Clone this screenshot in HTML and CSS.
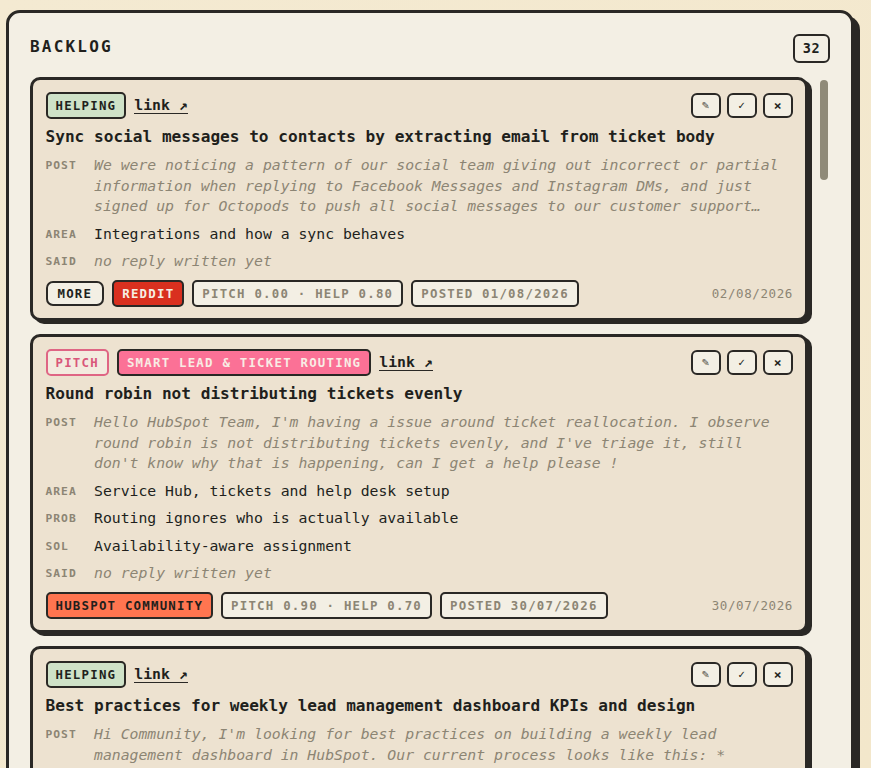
FILE: index.html
```html
<!DOCTYPE html>
<html lang="en">
<head>
<meta charset="UTF-8">
<meta name="viewport" content="width=device-width, initial-scale=1.0">
<title>Backlog</title>
<link rel="stylesheet" href="styles.css">
</head>
<body>

<section class="panel">

<header class="panel-head">
<h2>BACKLOG</h2>
<span class="count">32</span>
</header>

<div class="panel-body">

<div class="list">

<article class="card">
<div class="card-top">
<div class="tags">
<span class="chip helping">HELPING</span>
<a class="link" href="#">link ↗</a>
</div>
<div class="actions">
<button class="edit">✎</button>
<button>✓</button>
<button class="close">×</button>
</div>
</div>
<h3>Sync social messages to contacts by extracting email from ticket body</h3>
<div class="row post"><span class="label">POST</span><p>We were noticing a pattern of our social team giving out incorrect or partial information when replying to Facebook Messages and Instagram DMs, and just signed up for Octopods to push all social messages to our customer support…</p></div>
<div class="row"><span class="label">AREA</span><p>Integrations and how a sync behaves</p></div>
<div class="row said"><span class="label">SAID</span><p>no reply written yet</p></div>
<div class="card-foot">
<div class="tags">
<span class="chip more">MORE</span>
<span class="chip reddit">REDDIT</span>
<span class="chip meta">PITCH 0.00 · HELP 0.80</span>
<span class="chip meta">POSTED 01/08/2026</span>
</div>
<span class="date">02/08/2026</span>
</div>
</article>

<article class="card">
<div class="card-top">
<div class="tags">
<span class="chip pitch">PITCH</span>
<span class="chip routing">SMART LEAD &amp; TICKET ROUTING</span>
<a class="link" href="#">link ↗</a>
</div>
<div class="actions">
<button class="edit">✎</button>
<button>✓</button>
<button class="close">×</button>
</div>
</div>
<h3>Round robin not distributing tickets evenly</h3>
<div class="row post"><span class="label">POST</span><p>Hello HubSpot Team, I'm having a issue around ticket reallocation. I observe round robin is not distributing tickets evenly, and I've triage it, still don't know why that is happening, can I get a help please !</p></div>
<div class="row"><span class="label">AREA</span><p>Service Hub, tickets and help desk setup</p></div>
<div class="row"><span class="label">PROB</span><p>Routing ignores who is actually available</p></div>
<div class="row"><span class="label">SOL</span><p>Availability-aware assignment</p></div>
<div class="row said"><span class="label">SAID</span><p>no reply written yet</p></div>
<div class="card-foot">
<div class="tags">
<span class="chip hubspot">HUBSPOT COMMUNITY</span>
<span class="chip meta">PITCH 0.90 · HELP 0.70</span>
<span class="chip meta">POSTED 30/07/2026</span>
</div>
<span class="date">30/07/2026</span>
</div>
</article>

<article class="card">
<div class="card-top">
<div class="tags">
<span class="chip helping">HELPING</span>
<a class="link" href="#">link ↗</a>
</div>
<div class="actions">
<button class="edit">✎</button>
<button>✓</button>
<button class="close">×</button>
</div>
</div>
<h3>Best practices for weekly lead management dashboard KPIs and design</h3>
<div class="row post"><span class="label">POST</span><p>Hi Community, I'm looking for best practices on building a weekly lead management dashboard in HubSpot. Our current process looks like this: *</p></div>
</article>

</div>

<div class="scrollbar"><div class="thumb"></div></div>

</div>

</section>

</body>
</html>
```

FILE: styles.css
```css
html,body{
    height:100%;
}

body{
    margin:0;
    height:768px;
    overflow:hidden;
    box-sizing:border-box;
    padding:10px 0 0 6px;
    font-family:"DejaVu Sans Mono",monospace;
    background:linear-gradient(135deg,#f4ead2,#f3e7cb);
    color:#211f1c;
}

.panel{
    width:848px;
    height:900px;
    box-sizing:border-box;
    background:#f3efe4;
    border:3px solid #2a2825;
    border-radius:14px;
    box-shadow:6px 6px 0 #2a2825;
    padding:20px 21px 0 21px;
}

.panel-head{
    display:flex;
    justify-content:space-between;
    align-items:center;
    height:30px;
    margin-bottom:14px;
}

h2{
    margin:0 0 4px 0;
    font-size:16px;
    letter-spacing:2.2px;
}

.count{
    box-sizing:border-box;
    width:37px;
    height:29px;
    line-height:24px;
    text-align:center;
    font-size:13.5px;
    font-weight:bold;
    border:2px solid #2a2825;
    border-radius:6px;
    letter-spacing:.6px;
}

.panel-body{
    display:flex;
    gap:12px;
    align-items:flex-start;
}

.list{
    width:778px;
    flex:none;
    display:flex;
    flex-direction:column;
    gap:13px;
}

.card{
    box-sizing:border-box;
    background:#ede2d0;
    border:3px solid #2a2825;
    border-radius:10px;
    box-shadow:4px 3px 0 #2a2825;
    padding:11.5px 12px 11px 12.5px;
}

.card-top,.card-foot{
    display:flex;
    justify-content:space-between;
    align-items:center;
}

.tags{
    display:flex;
    align-items:center;
    gap:8px;
}

.chip{
    box-sizing:border-box;
    height:27.5px;
    line-height:23.5px;
    padding:0 8px;
    font-size:12.4px;
    font-weight:bold;
    letter-spacing:1.22px;
    border:2px solid #2a2825;
    border-radius:5px;
    white-space:nowrap;
}

.helping{
    background:#cfe2c8;
}

.more{
    height:25px;
    line-height:21px;
    padding:0 10px;
    background:#f3efe4;
    border-radius:7px;
}

.reddit{
    background:#d9301f;
    color:#f6efe4;
}

.meta{
    background:#f3efe4;
    color:#8c8574;
    font-weight:bold;
}

.pitch{
    color:#d9577a;
    border-color:#df6584;
    background:#f3ebdf;
}

.routing{
    background:#fb7196;
    color:#f8ece4;
}

.hubspot{
    background:#ff7550;
}

.link{
    color:#211f1c;
    font-size:14.8px;
    font-weight:bold;
    text-decoration:none;
    border-bottom:1.5px solid #2a2825;
    line-height:17px;
}

.actions{
    display:flex;
    gap:5.5px;
}

button{
    box-sizing:border-box;
    width:30.5px;
    height:25px;
    padding:0;
    background:#f3efe4;
    border:2px solid #2a2825;
    border-radius:6px;
    color:#211f1c;
    font-family:"DejaVu Sans",sans-serif;
    font-size:10px;
    font-weight:bold;
}

.edit{
    color:#55514a;
}

.close{
    font-family:"DejaVu Sans Mono",monospace;
    font-size:13px;
}

h3{
    margin:6.5px 0 8.5px 0;
    font-size:16.12px;
    line-height:21px;
}

.row{
    display:flex;
    margin-bottom:7px;
    font-size:14.78px;
    line-height:20.5px;
}

.row p{
    margin:0;
}

.label{
    flex:none;
    width:48.5px;
    height:20.5px;
    line-height:22px;
    font-size:11.3px;
    font-weight:bold;
    letter-spacing:1px;
    color:#8c8574;
}

.post p,.said p{
    font-style:italic;
    color:#8c8574;
}

.card-foot{
    margin-top:8px;
}

.date{
    font-size:12.5px;
    letter-spacing:.6px;
    color:#8c8574;
}

.scrollbar{
    flex:none;
    width:8px;
    padding-top:3px;
}

.thumb{
    height:100px;
    border-radius:4px;
    background:#8f8a78;
}
```
